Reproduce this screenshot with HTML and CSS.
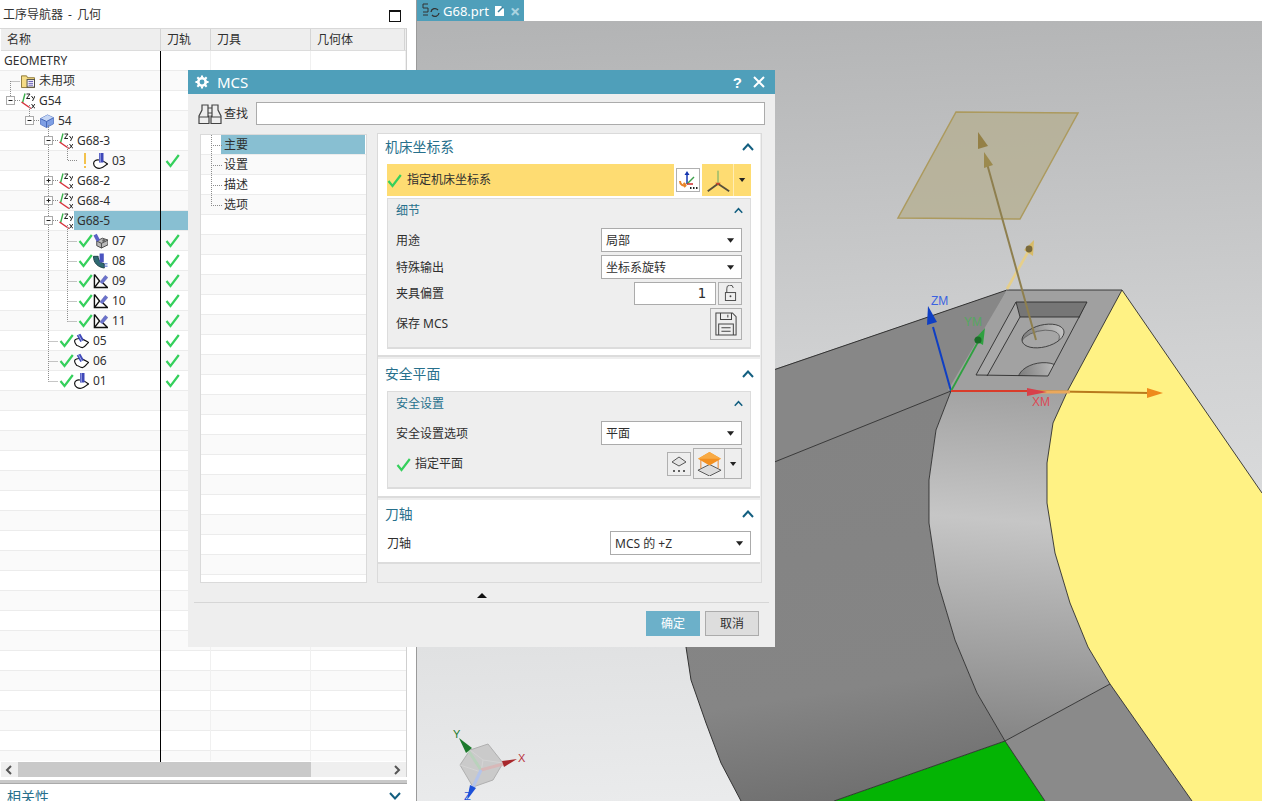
FILE: index.html
```html
<!DOCTYPE html>
<html lang="zh">
<head>
<meta charset="utf-8">
<title>G68.prt - MCS</title>
<link rel="stylesheet" href="styles.css">
</head>
<body>
<svg class="defs" width="0" height="0" aria-hidden="true">
  <defs>
    <symbol id="check" viewBox="0 0 15 15"><path d="M1.500 8 L5.500 13 L13.800 2" fill="none" stroke="#35d05c" stroke-width="2.200"/></symbol>
    <symbol id="mcs" viewBox="0 0 14 16">
      <path d="M4 0.500 L1.500 10" stroke="#3cb04c" stroke-width="1.400" fill="none"/>
      <path d="M0.500 9 L10 15.500" stroke="#d8323c" stroke-width="1.400" fill="none"/>
      <path d="M5.500 1 H9 L5.500 5.500 H9 M10.500 3 L12.200 5.500 M14 3 L11.500 8 M10.500 11 L14 15.500 M14 11 L10.500 15.500" stroke="#222" stroke-width="1" fill="none"/>
    </symbol>
    <symbol id="folder" viewBox="0 0 15 15">
      <path d="M0.500 2 H6 L7 4 H14.500 V14.500 H0.500 Z" fill="#f5dc86" stroke="#8a7432"/>
      <rect x="6.500" y="6" width="8" height="8" fill="#fff" stroke="#444"/>
      <path d="M8 8 H13 M8 10 H13 M8 12 H13" stroke="#5a4fb0"/>
    </symbol>
    <symbol id="cube" viewBox="0 0 15 15">
      <path d="M0.500 5 L8 1 L14.500 4 L14.500 10.500 L7 14.500 L0.500 11 Z" fill="#7f9fe4" stroke="#5f7fc8"/>
      <path d="M0.500 5 L8 1 L14.500 4 L7 8 Z" fill="#c5d6f5"/>
      <path d="M0.500 5 L7 8 L14.500 4 M7 8 V14.500" fill="none" stroke="#3f62b4"/>
    </symbol>
    <symbol id="op-a" viewBox="0 0 15 16">
      <path d="M0.600 10.500 C0.600 7.500 3.500 6.500 6 7 C9.500 7.500 12.500 9 14.600 11 C12 12 11 14.500 8 15 C4.500 16 0.600 14 0.600 10.500Z" fill="#fff" stroke="#111" stroke-width="1.200"/>
      <rect x="6" y="0" width="4.500" height="9.500" fill="#3f48b8"/>
      <path d="M7.200 0 V9.500" stroke="#a9b0ea"/>
    </symbol>
    <symbol id="op-b" viewBox="0 0 16 16">
      <path d="M0.600 8 C0.600 6 4 5 7 5.500 C10 6 13 8 15.600 9.500 C13 11 12 15 9 15 C6 15 5 12.800 3 12.800 C1.500 11 0.600 10 0.600 8Z" fill="#fff" stroke="#111" stroke-width="1.200"/>
      <path d="M3 2 L6.800 .3 L10.500 7 L6.800 9Z" fill="#3f48b8"/>
      <path d="M4.800 1.500 L8.400 8" stroke="#a9b0ea"/>
    </symbol>
    <symbol id="op-drill" viewBox="0 0 16 16">
      <path d="M4 8 L10 5 L16 7 V12 L9 15.500 L4 13Z" fill="#b8b8b8" stroke="#444"/>
      <path d="M4 8 L9 10.500 L16 7 M9 10.500 V15.500" fill="none" stroke="#444"/>
      <path d="M0.500 2 L4 .3 L7.500 7 L4 8.800Z" fill="#5a62c4"/>
      <circle cx="11.500" cy="7.500" r="1.600" fill="#666"/>
    </symbol>
    <symbol id="op-curve" viewBox="0 0 16 16">
      <path d="M0.500 3 C0.500 10 5 14.500 12 15.500 V11 C8 10 5.500 7 5.500 3Z" fill="#2f6a72" stroke="#1b3e44"/>
      <rect x="7" y="0" width="4.500" height="9.500" fill="#4a54c0"/>
      <path d="M12 11 H15.500 M12 13.500 H15.500" stroke="#3b5ac8"/>
    </symbol>
    <symbol id="op-pen" viewBox="0 0 16 16">
      <path d="M1.500 1 V15 H15.500 L9.500 9 M1.500 1 L7 8 L1.500 15" fill="none" stroke="#111" stroke-width="1.500"/>
      <path d="M7.500 9 L13 2 L15.800 4.200 L10 11Z" fill="#6a72cc" stroke="#4a50a8" stroke-width=".5"/>
    </symbol>
    <symbol id="caret" viewBox="0 0 9 5"><path d="M0 0 H8 L4 5Z" fill="#222"/></symbol>
    <symbol id="chev" viewBox="0 0 12 8"><path d="M1 7 L6 1.500 L11 7" fill="none" stroke="#135f80" stroke-width="2"/></symbol>
  </defs>
</svg>

<div class="app">
  <aside class="nav">
    <div class="nav-title">
      <span class="nav-name">工序导航器 - 几何</span>
      <span class="max-box"></span>
    </div>
    <div class="nav-table">
      <div class="thead">
        <div class="th">名称</div><div class="th">刀轨</div><div class="th">刀具</div><div class="th">几何体</div>
      </div>
      <div class="tbody">
        <div class="row"><div class="c name plain">GEOMETRY</div><div class="c"></div><div class="c"></div><div class="c"></div></div>
        <div class="row alt"><div class="c name l0"><svg class="ico"><use href="#folder"/></svg>未用项</div><div class="c"></div><div class="c"></div><div class="c"></div></div>
        <div class="row"><div class="c name l0"><svg class="ico"><use href="#mcs"/></svg>G54</div><div class="c"></div><div class="c"></div><div class="c"></div></div>
        <div class="row alt"><div class="c name l1"><svg class="ico"><use href="#cube"/></svg>54</div><div class="c"></div><div class="c"></div><div class="c"></div></div>
        <div class="row"><div class="c name l2"><svg class="ico"><use href="#mcs"/></svg>G68-3</div><div class="c"></div><div class="c"></div><div class="c"></div></div>
        <div class="row alt"><div class="c name l3"><span class="bang"></span><svg class="ico op"><use href="#op-a"/></svg>03</div><div class="c tick"><svg class="chk"><use href="#check"/></svg></div><div class="c"></div><div class="c"></div></div>
        <div class="row"><div class="c name l2"><svg class="ico"><use href="#mcs"/></svg>G68-2</div><div class="c"></div><div class="c"></div><div class="c"></div></div>
        <div class="row alt"><div class="c name l2"><svg class="ico"><use href="#mcs"/></svg>G68-4</div><div class="c"></div><div class="c"></div><div class="c"></div></div>
        <div class="row sel"><div class="c name l2"><svg class="ico"><use href="#mcs"/></svg><span class="sel-label">G68-5</span></div><div class="c"></div><div class="c"></div><div class="c"></div></div>
        <div class="row alt"><div class="c name l3"><svg class="chk"><use href="#check"/></svg><svg class="ico op"><use href="#op-drill"/></svg>07</div><div class="c tick"><svg class="chk"><use href="#check"/></svg></div><div class="c"></div><div class="c"></div></div>
        <div class="row"><div class="c name l3"><svg class="chk"><use href="#check"/></svg><svg class="ico op"><use href="#op-curve"/></svg>08</div><div class="c tick"><svg class="chk"><use href="#check"/></svg></div><div class="c"></div><div class="c"></div></div>
        <div class="row alt"><div class="c name l3"><svg class="chk"><use href="#check"/></svg><svg class="ico op"><use href="#op-pen"/></svg>09</div><div class="c tick"><svg class="chk"><use href="#check"/></svg></div><div class="c"></div><div class="c"></div></div>
        <div class="row"><div class="c name l3"><svg class="chk"><use href="#check"/></svg><svg class="ico op"><use href="#op-pen"/></svg>10</div><div class="c tick"><svg class="chk"><use href="#check"/></svg></div><div class="c"></div><div class="c"></div></div>
        <div class="row alt"><div class="c name l3"><svg class="chk"><use href="#check"/></svg><svg class="ico op"><use href="#op-pen"/></svg>11</div><div class="c tick"><svg class="chk"><use href="#check"/></svg></div><div class="c"></div><div class="c"></div></div>
        <div class="row"><div class="c name l2"><svg class="chk"><use href="#check"/></svg><svg class="ico op"><use href="#op-b"/></svg>05</div><div class="c tick"><svg class="chk"><use href="#check"/></svg></div><div class="c"></div><div class="c"></div></div>
        <div class="row alt"><div class="c name l2"><svg class="chk"><use href="#check"/></svg><svg class="ico op"><use href="#op-b"/></svg>06</div><div class="c tick"><svg class="chk"><use href="#check"/></svg></div><div class="c"></div><div class="c"></div></div>
        <div class="row"><div class="c name l2"><svg class="chk"><use href="#check"/></svg><svg class="ico op"><use href="#op-a"/></svg>01</div><div class="c tick"><svg class="chk"><use href="#check"/></svg></div><div class="c"></div><div class="c"></div></div>
        <div class="row-fill"></div>
        <svg class="tree-lines" viewBox="0 51 160 340" width="160" height="340">
          <g class="dots">
            <path d="M10.500 81 V96 M10.500 81.500 H20"/>
            <path d="M15 100.500 H21"/>
            <path d="M29.500 105 V116 M34 120.500 H39"/>
            <path d="M48.500 125 V381.500"/>
            <path d="M53 140.500 H58 M53 180.500 H58 M53 200.500 H58 M53 220.500 H58"/>
            <path d="M67.500 145 V160.500 H78"/>
            <path d="M67.500 225 V321.500 M67.500 241.500 H77 M67.500 261.500 H77 M67.500 281.500 H77 M67.500 301.500 H77 M67.500 321.500 H77"/>
            <path d="M48.500 341.500 H58 M48.500 361.500 H58 M48.500 381.500 H58"/>
          </g>
          <g class="exp">
            <rect x="6.500" y="96.500" width="8" height="8"/><path d="M8.500 100.500 H12.500"/>
            <rect x="25.500" y="116.500" width="8" height="8"/><path d="M27.500 120.500 H31.500"/>
            <rect x="44.500" y="136.500" width="8" height="8"/><path d="M46.500 140.500 H50.500"/>
            <rect x="44.500" y="176.500" width="8" height="8"/><path d="M46.500 180.500 H50.500 M48.500 178.500 V182.500"/>
            <rect x="44.500" y="196.500" width="8" height="8"/><path d="M46.500 200.500 H50.500 M48.500 198.500 V202.500"/>
            <rect x="44.500" y="216.500" width="8" height="8"/><path d="M46.500 220.500 H50.500"/>
          </g>
        </svg>
      </div>
      <div class="hscroll">
        <svg class="sarrow" viewBox="0 0 8 10"><path d="M6 1 L2 5 L6 9" fill="none" stroke="#555" stroke-width="2"/></svg>
        <div class="track"><div class="thumb"></div></div>
        <svg class="sarrow" viewBox="0 0 8 10"><path d="M2 1 L6 5 L2 9" fill="none" stroke="#555" stroke-width="2"/></svg>
      </div>
    </div>
    <div class="nav-split"></div>
    <div class="nav-foot">
      <span>相关性</span>
      <svg class="foot-chev" viewBox="0 0 12 8"><path d="M1 1 L6 6.500 L11 1" fill="none" stroke="#135f80" stroke-width="2"/></svg>
    </div>
  </aside>

  <main class="work">
    <div class="tabbar">
      <div class="tab">
        <svg class="tab-ico" viewBox="0 0 20 16"><path d="M1 1 H6 M1 1 V5 H6 V9 H1 M1 12 H6" fill="none" stroke="#333"/><path d="M9 9 A4 4 0 0 1 16 7 M17 10 A4 4 0 0 1 10 12" fill="none" stroke="#333" stroke-width="1.300"/></svg>
        <span class="tab-name">G68.prt</span>
        <svg class="tab-doc" viewBox="0 0 11 12"><path d="M1 1 H7 L10 4 V11 H1Z" fill="#fff"/><path d="M4 7 L9 2" stroke="#3b7f9a" stroke-width="1.500"/></svg>
        <span class="tab-x">×</span>
      </div>
    </div>
    <svg class="scene" viewBox="417 21 845 780" preserveAspectRatio="none">
      <defs>
        <linearGradient id="bg" x1="0.250" y1="0" x2="0.300" y2="1"><stop offset="0" stop-color="#b3b4b5"/><stop offset=".45" stop-color="#d0d1d2"/><stop offset="1" stop-color="#eaebec"/></linearGradient>
        <linearGradient id="band" gradientUnits="userSpaceOnUse" x1="1010" y1="385" x2="985" y2="740"><stop offset="0" stop-color="#a0a0a0"/><stop offset=".38" stop-color="#c6c6c6"/><stop offset=".75" stop-color="#a0a0a0"/><stop offset="1" stop-color="#858585"/></linearGradient>
        <linearGradient id="face" gradientUnits="userSpaceOnUse" x1="820" y1="420" x2="880" y2="801"><stop offset="0" stop-color="#838383"/><stop offset=".7" stop-color="#858585"/><stop offset="1" stop-color="#6e6e6e"/></linearGradient>
        <linearGradient id="hole" x1="0" y1="0" x2="1" y2="0"><stop offset="0" stop-color="#7a7a7a"/><stop offset="1" stop-color="#c4c4c4"/></linearGradient>
        <clipPath id="floor-clip"><path d="M1020 317 H1080 L1048 376 H987Z"/></clipPath>
        <clipPath id="hole-clip"><ellipse cx="1043" cy="336" rx="21.500" ry="11" transform="rotate(-14 1043 336)"/></clipPath>
      </defs>
      <rect x="417" y="21" width="845" height="780" fill="url(#bg)"/>
      <path d="M1007 290 L775 369 L680 402 V600 L686 647 L691 680 L706 723 L721 763 L741 801 H834 L1005 741 L977 693 L955 640 L938 583 L929 523 L929 480 L936 430 L951 391Z" fill="url(#face)"/>
      <path d="M1007 290 L680 402 L680 500 L951 391Z" fill="#878787"/>
      <path d="M951 391 L680 500" stroke="#3a3a3a" fill="none"/>
      <path d="M1007 290 L680 402" stroke="#333" fill="none"/>
      <path d="M686 647 L691 680 L706 723 L721 763 L741 801" stroke="#333" fill="none"/>
      <path d="M1007 290 H1122 L1068 390 L1053 423 L1047 463 L1047 503 L1055 553 L1070 603 L1088 647 L1110 684 L1005 741 L977 693 L955 640 L938 583 L929 523 L929 480 L936 430 L951 391Z" fill="url(#band)"/>
      <path d="M1007 290 H1122 L1068 390 H948 Z" fill="#a0a0a0"/>
      <path d="M1122 290 L1262 493 V801 H1192 L1110 684 L1088 647 L1070 603 L1055 553 L1047 503 L1047 463 L1053 423 L1068 390Z" fill="#fff284"/>
      <path d="M1005 741 L1110 684 L1192 801 H1045Z" fill="#8a8a8a"/>
      <path d="M1005 741 L1045 801 H834Z" fill="#04b404"/>
      <g fill="none" stroke="#2c2c2c" stroke-width=".9">
        <path d="M1007 290 H1122 L1262 493"/>
        <path d="M1122 290 L1068 390 L1053 423 L1047 463 L1047 503 L1055 553 L1070 603 L1088 647 L1110 684 L1192 801"/>
        <path d="M951 391 L936 430 L929 480 L929 523 L938 583 L955 640 L977 693 L1005 741 L1045 801"/>
        <path d="M1005 741 L1110 684"/>
        <path d="M1005 741 L834 801"/>
      </g>
      <path d="M1020 317 H1080 L1048 376 H987Z" fill="#a2a2a2"/>
      <path d="M1016 302 H1087 L1080 317 H1020Z" fill="#767676"/>
      <path d="M1016 302 L1020 317 L987 376 L976 375Z" fill="#a8a8a8"/>
      <ellipse cx="1043" cy="336" rx="21.500" ry="11" transform="rotate(-14 1043 336)" fill="url(#hole)"/>
      <g clip-path="url(#hole-clip)"><ellipse cx="1040" cy="341" rx="20" ry="10" transform="rotate(-14 1040 341)" fill="#a6a6a6" stroke="#555" stroke-width=".7"/></g>
      <ellipse cx="1043" cy="336" rx="21.500" ry="11" transform="rotate(-14 1043 336)" fill="none" stroke="#333" stroke-width=".8"/>
      <g clip-path="url(#floor-clip)"><ellipse cx="1040" cy="376" rx="22" ry="13" transform="rotate(-10 1040 376)" fill="url(#hole)" stroke="#333" stroke-width=".8"/></g>
      <path d="M1016 302 H1087 L1048 376 L976 375Z M1020 317 L987 376 M1020 317 H1080 M1016 302 L1020 317" fill="none" stroke="#2c2c2c" stroke-width=".9"/>
      <path d="M956 112 L1078 113 L1020 219 L898 218Z" fill="#b4ad8e" fill-opacity=".72" stroke="#ac9a5e" stroke-width="1.500"/>
      <path d="M1007 289 L1028 252" stroke="#e6cf8a" stroke-width="2.600"/>
      <path d="M1034 240 L1024 250 L1033 256Z" fill="#d8bc68"/>
      <circle cx="1029" cy="249" r="3.400" fill="#7a6a3c"/>
      <path d="M1036 340 L986 160" stroke="#8e7f4e" stroke-width="2"/>
      <path d="M978 132 L978 149 L988 146Z" fill="#948046"/>
      <path d="M984 152 L984 168 L993 165Z" fill="#9c8a4e"/>
      <path d="M951 391 L933 327" stroke="#0f3fc4" stroke-width="2"/>
      <path d="M928 306 L927 325 L937 322Z" fill="#0f3fc4"/>
      <path d="M951 391 L978 342" stroke="#2fa040" stroke-width="1.800"/>
      <path d="M985 328 L974 340 L983 345Z" fill="#2fa040"/>
      <circle cx="978" cy="340" r="3.500" fill="#1b6c28"/>
      <path d="M951 391 H1030" stroke="#d93c2a" stroke-width="2"/>
      <path d="M1030 391 L1150 393" stroke="#b87a1c" stroke-width="2"/>
      <path d="M1030 392 L1070 392" stroke="#eaa85c" stroke-width="3"/>
      <path d="M1047 392 L1027 388 L1027 396Z" fill="#d8404a"/>
      <path d="M1163 393 L1147 388 L1147 398Z" fill="#ee8a1c"/>
      <text class="t-axis" x="931" y="305" fill="#3b63e0">ZM</text>
      <text class="t-axis" x="964" y="326" fill="#55a860">YM</text>
      <text class="t-axis" x="1032" y="406" fill="#dd4a55">XM</text>

      <g class="triad">
        <path d="M488 744 L503 763 L493 780 L473 787 L460 765 L470 750Z" fill="#c4c4c4" fill-opacity=".85" stroke="#b0b0b0"/>
        <path d="M470 750 L483 760 L503 763 M483 760 L481 772 M460 765 L481 772 L473 787" stroke="#d4d4d4" fill="none"/>
        <path d="M481 770 L468 750" stroke="#b9d2bc" stroke-width="3"/>
        <path d="M459 738 L466 753 L472 748Z" fill="#1c7a2c"/>
        <path d="M481 770 L503 764" stroke="#d8b8b8" stroke-width="3"/>
        <path d="M517 759 L502 761 L504 767Z" fill="#a8282c"/>
        <path d="M481 770 L473 787" stroke="#b4c4ea" stroke-width="3"/>
        <path d="M467 800 L470 785 L476 788Z" fill="#1c50d8"/>
        <text class="t-tri" x="453" y="738" fill="#1c7a2c">Y</text>
        <text class="t-tri" x="518" y="762" fill="#b8303c">X</text>
        <text class="t-tri" x="464" y="800" fill="#1c50d8">Z</text>
      </g>
    </svg>
  </main>
</div>

<section class="dialog">
  <header class="dlg-title">
    <svg class="gear" viewBox="0 0 16 16"><circle cx="8" cy="8" r="4.300" fill="none" stroke="#fff" stroke-width="3"/><path d="M8 0.500 V3 M8 13 V15.500 M0.500 8 H3 M13 8 H15.500 M2.700 2.700 L4.500 4.500 M11.500 11.500 L13.300 13.300 M2.700 13.300 L4.500 11.500 M11.500 4.500 L13.300 2.700" stroke="#fff" stroke-width="2.400"/></svg>
    <span class="dlg-name">MCS</span>
    <span class="dlg-help">?</span>
    <svg class="dlg-close" viewBox="0 0 12 12"><path d="M1 1 L11 11 M11 1 L1 11" stroke="#fff" stroke-width="2"/></svg>
  </header>
  <div class="find">
    <svg class="binoc" viewBox="0 0 24 23"><path d="M4 3 H10 V14 H11 V21.500 H1 V14 L4 8Z M14 3 H20 V8 L23 14 V21.500 H13 V14 H14Z M1 15 H11 M13 15 H23 M10 6 H14 M10 11 H14" fill="none" stroke="#444" stroke-width="1.200"/></svg>
    <span class="find-label">查找</span>
    <div class="find-input"></div>
  </div>
  <div class="dlg-main">
    <nav class="opts">
      <div class="opt first"><span class="opt-sel">主要</span></div>
      <div class="opt">设置</div>
      <div class="opt">描述</div>
      <div class="opt">选项</div>
      <div class="opt-empty"></div>
    </nav>
    <div class="panel">
      <div class="card card-a">
        <div class="card-head"><span>机床坐标系</span><svg class="chev"><use href="#chev"/></svg></div>
        <div class="spec">
          <div class="spec-label"><svg class="chk"><use href="#check"/></svg>指定机床坐标系</div>
          <div class="spec-btn">
            <svg viewBox="0 0 22 22" class="ic22"><path d="M10 15 V4" stroke="#1436b0" stroke-width="1.500"/><path d="M10 2 L7.500 6 H12.500Z" fill="#1436b0"/><path d="M10 15 L17 8" stroke="#3ca04a" stroke-width="1.500"/><path d="M10 15 H16" stroke="#cc2c2c" stroke-width="1.500"/><path d="M3 12 C3 16 6 17 9 16 L7 18 M9 16 L6.500 14" fill="none" stroke="#e8842a" stroke-width="2"/><path d="M13 19 H14.500 M16 19 H17.500 M19 19 H20.500" stroke="#222" stroke-width="1.800"/></svg>
          </div>
          <div class="spec-drop">
            <svg viewBox="0 0 30 24" class="triax"><path d="M15 16 V2" stroke="#5aa868" stroke-width="1"/><path d="M15 16 L4 24" stroke="#57503a" stroke-width="2"/><path d="M15 16 L27 24" stroke="#57503a" stroke-width="2"/><path d="M12 15 L18 15 L15 18Z" fill="#c8442c"/></svg>
            <svg class="caret-sm"><use href="#caret"/></svg>
          </div>
        </div>
        <div class="sub sub-a">
          <div class="sub-head"><span>细节</span><svg class="chev-sm"><use href="#chev"/></svg></div>
          <div class="frow"><label>用途</label><div class="select"><span>局部</span><svg class="caret"><use href="#caret"/></svg></div></div>
          <div class="frow"><label>特殊输出</label><div class="select"><span>坐标系旋转</span><svg class="caret"><use href="#caret"/></svg></div></div>
          <div class="frow"><label>夹具偏置</label>
            <div class="group">
              <div class="num">1</div>
              <div class="lock"><svg viewBox="0 0 14 18" class="lock-ic"><path d="M3 8 V4 A3.500 3.500 0 0 1 10 3" fill="none" stroke="#444"/><rect x="1.500" y="8" width="11" height="8.500" fill="none" stroke="#444"/><circle cx="7" cy="12" r="1" fill="#444"/></svg></div>
            </div>
          </div>
          <div class="frow frow-save"><label>保存 MCS</label>
            <div class="save"><svg viewBox="0 0 24 26" class="save-ic"><path d="M1 1 H19 L23 5 V25 H1Z M6 1 V8 H18 V1 M14 3 V6 M4 13 H20 V25 H4Z M7 17 H17 M7 21 H17" fill="none" stroke="#444" stroke-width="1.100"/></svg></div>
          </div>
        </div>
      </div>
      <div class="card card-b">
        <div class="card-head"><span>安全平面</span><svg class="chev"><use href="#chev"/></svg></div>
        <div class="sub sub-b">
          <div class="sub-head"><span>安全设置</span><svg class="chev-sm"><use href="#chev"/></svg></div>
          <div class="frow"><label>安全设置选项</label><div class="select"><span>平面</span><svg class="caret"><use href="#caret"/></svg></div></div>
          <div class="frow frow-plane">
            <label class="lbl-check"><svg class="chk"><use href="#check"/></svg>指定平面</label>
            <div class="group plane-tools">
              <div class="plane-small"><svg viewBox="0 0 20 20" class="ic20"><path d="M10 3 L17 8 L10 12 L3 8Z" fill="#e4e4e4" stroke="#555"/><path d="M4 17 H6 M9 17 H11 M14 17 H16" stroke="#333" stroke-width="1.500"/></svg></div>
              <div class="plane-big">
                <div class="plane-pic"><svg viewBox="0 0 26 26" class="ic26"><path d="M13 14 L25 20 L13 26 L1 20Z" fill="#dcdcdc" stroke="#555"/><path d="M4 9 V18 M22 9 V18" stroke="#e8842a"/><path d="M13 1 L25 8 L13 15 L1 8Z" fill="#f39020"/><path d="M13 1 L25 8 L13 8 L1 8Z" fill="#f8aa44"/></svg></div>
                <div class="plane-caret"><svg class="caret-sm"><use href="#caret"/></svg></div>
              </div>
            </div>
          </div>
        </div>
      </div>
      <div class="card card-c">
        <div class="card-head"><span>刀轴</span><svg class="chev"><use href="#chev"/></svg></div>
        <div class="frow axis-row"><label>刀轴</label><div class="select"><span>MCS 的 +Z</span><svg class="caret"><use href="#caret"/></svg></div></div>
      </div>
    </div>
  </div>
  <div class="collapse"><span class="tri-up"></span></div>
  <div class="dlg-rule"></div>
  <footer class="dlg-foot">
    <div class="btn primary">确定</div>
    <div class="btn">取消</div>
  </footer>
</section>
</body>
</html>
```

FILE: styles.css
```css
* { box-sizing: border-box; }
html, body { margin: 0; padding: 0; height: 801px; overflow: hidden; background: #fff; }
body { position: relative; font: 12px/16px "Noto Sans", "Noto Sans CJK SC", sans-serif; color: #2f2f2f; }
.defs { position: absolute; }
svg { display: block; flex: none; }

.app { display: flex; height: 801px; }

/* navigator */
.nav { width: 417px; flex: none; display: flex; flex-direction: column; background: #fff; border-right: 1px solid #9a9a9a; }
.nav-title { height: 28px; flex: none; display: flex; align-items: center; justify-content: space-between; padding: 1px 0 0 3px; width: 407px; font-size: 12px; color: #333; }
.nav-name { word-spacing: 2px; }
.max-box { width: 12px; height: 12px; border: 1px solid #111; border-top-width: 2px; margin: 3px 6px 0 0; }
.nav-table { width: 407px; height: 749px; flex: none; border-top: 1px solid #d8d8d8; border-right: 1px solid #cfcfcf; display: flex; flex-direction: column; }
.thead { height: 22px; flex: none; display: grid; grid-template-columns: 160px 50px 100px 94px; background: #eeeeee; border-bottom: 1px solid #dcdcdc; margin-left: 1px; }
.th { padding: 2px 0 0 6px; border-right: 1px solid #d4d4d4; line-height: 17px; }
.tbody { position: relative; height: 711px; flex: none; overflow: hidden; }
.tbody::after { content: ""; position: absolute; left: 160px; top: 0; bottom: 0; width: 1px; background: #000; }
.row { height: 20px; display: grid; grid-template-columns: 160px 51px 100px 95px; background: #fff; border-bottom: 1px solid #ececec; }
.row.alt { background: #fafafa; }
.c { border-right: 1px solid #f0f0f0; min-width: 0; white-space: nowrap; display: flex; align-items: center; height: 19px; }
.name { border-right: 0; line-height: 19px; }
.plain { padding-left: 4px; }
.l0 { padding-left: 21px; }
.l1 { padding-left: 40px; }
.l2 { padding-left: 59px; }
.l3 { padding-left: 78px; }
.ico { width: 14px; height: 16px; margin-right: 4px; }
.ico.op { width: 15px; margin-right: 4px; }
.chk { width: 15px; height: 15px; }
.tick { padding-left: 5px; }
.bang { width: 15px; height: 16px; position: relative; }
.bang::before { content: ""; position: absolute; left: 6px; top: 0; width: 2px; height: 11px; background: #f3c24c; }
.bang::after { content: ""; position: absolute; left: 6px; top: 13px; width: 2px; height: 2px; background: #f3c24c; }
.sel .c { background: #88bfd2; border-right-color: #88bfd2; }
.sel .c:nth-child(n+3) { background: transparent; }
.sel .name { background: none; }
.sel-label { flex: 1; margin-left: -3px; padding-left: 3px; height: 19px; background: #88bfd2; }
.row-fill { height: 370px; background:
  linear-gradient(to right, transparent 210px, #f0f0f0 210px 211px, transparent 211px 310px, #f0f0f0 310px 311px, transparent 311px),
  repeating-linear-gradient(to bottom, #fafafa 0 19px, #ececec 19px 20px, #fff 20px 39px, #ececec 39px 40px); }
.tree-lines { position: absolute; left: 0; top: 0; pointer-events: none; }
.dots path { fill: none; stroke: #8c8c8c; stroke-dasharray: 1 1; }
.exp rect { fill: #fdfdfd; stroke: #aaa; }
.exp path { fill: none; stroke: #222; }
.hscroll { height: 15px; flex: none; margin-left: 1px; display: flex; align-items: center; background: #efefef; }
.sarrow { width: 8px; height: 10px; margin: 0 5px 0 4px; }
.track { flex: 1; height: 15px; }
.thumb { width: 293px; height: 15px; background: #c9c9c9; }
.nav-split { width: 407px; height: 4px; flex: none; margin-top: 3px; background: #c8c8c8; border-bottom: 1px solid #aaa; }
.nav-foot { width: 407px; display: flex; justify-content: space-between; padding: 4px 6px 0 7px; color: #27708c; font-size: 14px; line-height: 18px; flex: none; }
.foot-chev { width: 12px; height: 8px; margin-top: 4px; }

/* viewport */
.work { flex: 1; min-width: 0; display: flex; flex-direction: column; background: #fff; }
.tabbar { height: 21px; flex: none; display: flex; }
.tab { width: 107px; background: #4f9fba; display: flex; align-items: center; padding-left: 5px; color: #fff; }
.tab-ico { width: 20px; height: 16px; }
.tab-name { margin-left: 1px; font-size: 13px; }
.tab-doc { width: 11px; height: 12px; margin-left: 5px; }
.tab-x { margin-left: 5px; color: #a9d3e0; font-size: 18px; font-weight: 700; line-height: 14px; }
.scene { width: 845px; height: 780px; flex: none; }
.t-axis { font: 12px "Liberation Sans", sans-serif; }
.t-tri { font: 11px "Liberation Sans", sans-serif; }

/* dialog */
.dialog { position: absolute; left: 188px; top: 70px; width: 587px; height: 577px; background: #eeeeee; display: flex; flex-direction: column; }
.dlg-title { height: 24px; background: #4f9fba; color: #fff; display: flex; align-items: center; padding: 0 10px 0 7px; flex: none; }
.gear { width: 14px; height: 14px; }
.dlg-name { margin-left: 8px; font-size: 15px; flex: 1; }
.dlg-help { font: 700 15px "Liberation Sans", sans-serif; margin-right: 11px; }
.dlg-close { width: 12px; height: 12px; }
.find { height: 39px; display: flex; align-items: center; padding: 0 10px; flex: none; }
.binoc { width: 24px; height: 23px; }
.find-label { margin-left: 2px; }
.find-input { flex: 1; height: 23px; margin-left: 8px; background: #fff; border: 1px solid #ababab; }
.dlg-main { height: 450px; display: flex; padding-left: 12px; gap: 10px; flex: none; }
.opts { width: 167px; height: 449px; margin-top: 1px; border: 1px solid #dadada; background: #fff; flex: none; overflow: hidden; display: flex; flex-direction: column; }
.opt { position: relative; height: 20px; flex: none; padding-left: 23px; line-height: 19px; border-bottom: 1px solid #ececec; background: #fff; }
.opt:nth-child(even) { background: #fafafa; }
.opt::before { content: ""; position: absolute; left: 10px; top: -10px; width: 10px; height: 20px; border-left: 1px dotted #8c8c8c; border-bottom: 1px dotted #8c8c8c; }
.opt.first { padding-left: 20px; }
.opt.first::before { top: 0; height: 10px; }
.opt-sel { display: block; height: 19px; background: #88bfd2; margin-right: 1px; padding-left: 3px; }
.opt-empty { flex: 1; background: repeating-linear-gradient(to bottom, #fff 0 19px, #ececec 19px 20px, #fafafa 20px 39px, #ececec 39px 40px); }
.panel { width: 385px; height: 450px; border: 1px solid #dadada; background: #eeeeee; flex: none; display: flex; flex-direction: column; gap: 2px; }
.card { background: #fff; width: 382px; border-bottom: 2px solid #dcdcdc; padding: 0 9px; flex: none; }
.card-a { height: 223px; }
.card-b { height: 139px; }
.card-c { height: 64px; }
.card-head { height: 30px; display: flex; align-items: center; justify-content: space-between; margin: 0 -2px 0 -2px; padding: 0 0 5px; font-size: 13.800px; color: #27708c; }
.card-b .card-head { height: 32px; padding-bottom: 2px; }
.card-c .card-head { height: 31px; padding-bottom: 3px; }
.chev { width: 12px; height: 8px; margin-right: -1px; }
.spec { display: flex; align-items: center; height: 32px; }
.spec-label { width: 287px; height: 32px; background: #fedc72; display: flex; align-items: center; gap: 5px; flex: none; }
.spec-btn { width: 24px; height: 24px; margin: 0 2px; background: #fff; border: 1px solid #b0b0b0; display: flex; align-items: center; justify-content: center; flex: none; }
.ic22 { width: 22px; height: 22px; }
.spec-drop { width: 49px; height: 32px; background: #fedc72; display: flex; align-items: center; position: relative; flex: none; }
.triax { width: 28px; height: 24px; margin-left: 2px; }
.spec-drop::after { content: ""; position: absolute; left: 31px; top: 0; width: 1px; height: 32px; background: #ffedb5; }
.caret-sm { width: 7px; height: 4px; margin-left: 7px; }
.sub { margin-top: 2px; width: 364px; background: #eeeeee; border: 1px solid #dcdcdc; border-bottom-width: 2px; padding: 0 8px 0 8px; display: flex; flex-direction: column; gap: 3px; }
.sub-a { height: 151px; }
.sub-b { height: 98px; margin-top: 0; }
.sub-head { height: 26px; display: flex; align-items: center; justify-content: space-between; color: #27708c; margin-right: -3px; padding-bottom: 3px; }
.chev-sm { width: 9px; height: 7px; margin-right: 2px; }
.frow { display: flex; align-items: center; justify-content: space-between; min-height: 23px; }
.frow label { padding-top: 1px; }
.frow-save label { padding-top: 0; margin-top: -1px; }
.select { width: 141px; height: 24px; background: #fff; border: 1px solid #ababab; display: flex; align-items: center; justify-content: space-between; padding: 1px 6px 0 4px; }
.caret { width: 8px; height: 5px; }
.group { display: flex; gap: 2px; }
.num { width: 82px; height: 23px; background: #fff; border: 1px solid #ababab; text-align: right; padding-right: 9px; font: 14px/21px "DejaVu Sans Mono", monospace; }
.lock { width: 24px; height: 23px; border: 1px solid #b0b0b0; display: flex; align-items: center; justify-content: center; }
.lock-ic { width: 13px; height: 17px; }
.frow-save { height: 32px; }
.save { width: 32px; height: 32px; border: 1px solid #b0b0b0; display: flex; align-items: center; justify-content: center; }
.save-ic { width: 22px; height: 24px; }
.lbl-check { display: flex; align-items: center; gap: 4px; }
.frow-plane { height: 31px; }
.plane-tools { align-items: center; }
.plane-small { width: 24px; height: 24px; border: 1px solid #b0b0b0; display: flex; align-items: center; justify-content: center; }
.ic20 { width: 20px; height: 20px; }
.plane-big { width: 49px; height: 31px; border: 1px solid #b0b0b0; display: flex; }
.plane-pic { width: 31px; border-right: 1px solid #b0b0b0; display: flex; align-items: center; justify-content: center; flex: none; }
.ic26 { width: 25px; height: 25px; }
.plane-caret { flex: 1; display: flex; align-items: center; }
.plane-caret .caret-sm { margin-left: 5px; }
.collapse { height: 19px; display: flex; align-items: center; justify-content: center; flex: none; }
.tri-up { width: 0; height: 0; border-left: 5px solid transparent; border-right: 5px solid transparent; border-bottom: 5px solid #111; margin-top: 6px; }
.dlg-rule { height: 1px; background: #d6d6d6; margin: 0 6px; flex: none; }
.dlg-foot { flex: 1; display: flex; justify-content: flex-end; gap: 5px; padding: 8px 16px 0 0; }
.btn { width: 54px; height: 25px; background: #dddddd; border: 1px solid #ababab; text-align: center; line-height: 23px; }
.btn.primary { background: #6cb0c9; border-color: #6cb0c9; color: #fff; }
```
